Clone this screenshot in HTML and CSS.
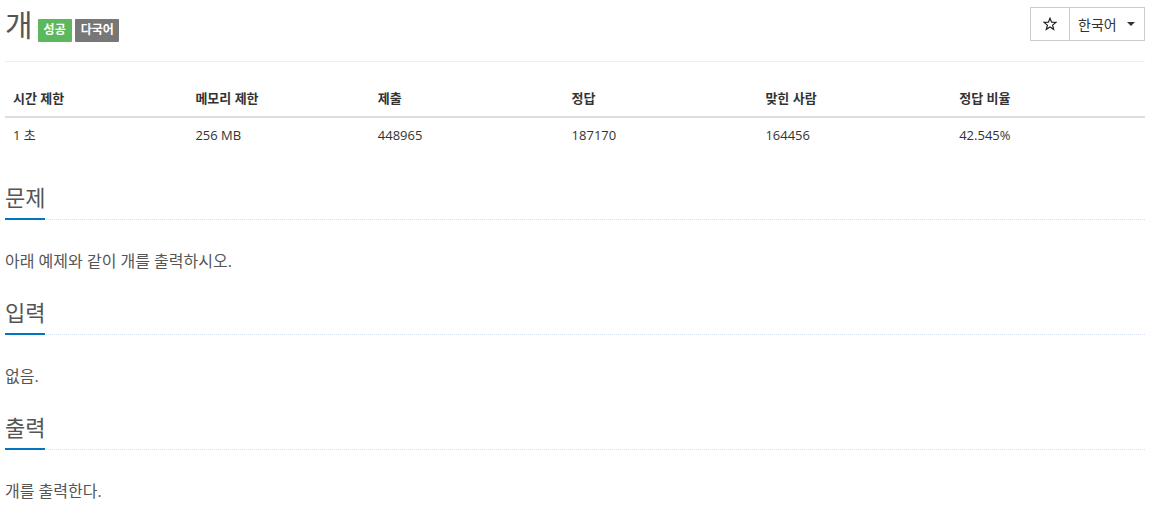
FILE: index.html
```html
<!DOCTYPE html>
<html lang="ko">
<head>
<meta charset="utf-8">
<title>개</title>
<link rel="stylesheet" href="styles.css">
</head>
<body>
<div class="container">
  <div class="page-header">
    <h1 class="title">
      <span class="title-text">개</span>
      <span class="label label-success">성공</span>
      <span class="label label-default">다국어</span>
    </h1>
    <div class="btn-group">
      <button class="btn btn-star" type="button" aria-label="즐겨찾기">
        <svg class="star-icon" width="14" height="14" viewBox="0 0 14 14" aria-hidden="true">
          <path d="M7 1.2 L8.6 5.2 L12.9 5.4 L9.6 8.1 L10.7 12.3 L7 9.9 L3.3 12.3 L4.4 8.1 L1.1 5.4 L5.4 5.2 Z" fill="none" stroke="#222" stroke-width="1.2" stroke-linejoin="miter"/>
        </svg>
      </button>
      <button class="btn btn-lang" type="button">한국어 <span class="caret"></span></button>
    </div>
  </div>

  <table class="info-table">
    <thead>
      <tr>
        <th class="col-narrow">시간 제한</th>
        <th class="col-narrow">메모리 제한</th>
        <th class="col-wide">제출</th>
        <th class="col-wide">정답</th>
        <th class="col-wide">맞힌 사람</th>
        <th class="col-wide">정답 비율</th>
      </tr>
    </thead>
    <tbody>
      <tr>
        <td>1 초</td>
        <td>256 MB</td>
        <td>448965</td>
        <td>187170</td>
        <td>164456</td>
        <td>42.545%</td>
      </tr>
    </tbody>
  </table>

  <section class="problem-section">
    <div class="headline"><h2>문제</h2></div>
    <p class="problem-text">아래 예제와 같이 개를 출력하시오.</p>
  </section>

  <section class="problem-section">
    <div class="headline"><h2>입력</h2></div>
    <p class="problem-text">없음.</p>
  </section>

  <section class="problem-section">
    <div class="headline"><h2>출력</h2></div>
    <p class="problem-text">개를 출력한다.</p>
  </section>
</div>
</body>
</html>
```

FILE: styles.css
```css
* {
  box-sizing: border-box;
}

html, body {
  margin: 0;
  padding: 0;
  background: #fff;
}

body {
  font-family: "Open Sans", "Noto Sans CJK KR", sans-serif;
  font-size: 13px;
  color: #333;
}

.container {
  width: 1140px;
  margin-left: 5px;
}

.page-header {
  display: flex;
  justify-content: space-between;
  align-items: flex-start;
  height: 62px;
  border-bottom: 1px solid #eee;
}

.title {
  margin: 0;
  display: flex;
  align-items: flex-start;
  font-weight: normal;
}

.title-text {
  font-size: 30px;
  line-height: 50px;
  color: #555;
  margin-right: 5px;
}

.label {
  display: inline-block;
  margin-top: 19px;
  margin-right: 3px;
  padding: 5px 6px 6px;
  font-size: 12px;
  line-height: 12px;
  font-weight: bold;
  color: #fff;
  border-radius: 1px;
}

.label-success {
  background: #5cb85c;
}

.label-default {
  background: #777;
  padding: 5px 5px 6px 6px;
}

.btn-group {
  display: flex;
  margin-top: 7px;
}

.btn {
  height: 34px;
  margin: 0;
  background: #fff;
  border: 1px solid #ccc;
  font-family: "Open Sans", "Noto Sans CJK KR", sans-serif;
  font-size: 14px;
  color: #333;
  display: flex;
  align-items: center;
}

.btn-star {
  width: 40px;
  justify-content: center;
  padding: 0;
}

.star-icon {
  display: block;
}

.btn-lang {
  width: 76px;
  margin-left: -1px;
  padding: 0 9px 0 8px;
  justify-content: space-between;
}

.caret {
  display: inline-block;
  width: 0;
  height: 0;
  border-top: 4px solid #333;
  border-left: 4px solid transparent;
  border-right: 4px solid transparent;
}

.info-table {
  width: 100%;
  margin-top: 19px;
  margin-bottom: 33px;
  border-collapse: collapse;
  table-layout: fixed;
}

.col-narrow {
  width: 16%;
}

.col-wide {
  width: 17%;
}

.info-table th,
.info-table td {
  padding: 8px;
  line-height: 18.5px;
  text-align: left;
  font-size: 13px;
}

.info-table th {
  font-weight: bold;
  color: #333;
  border-bottom: 2px solid #ddd;
}

.info-table td {
  color: #333;
}

.headline {
  display: flex;
  border-bottom: 1px dotted #d5deea;
  margin-bottom: 31px;
}

.headline h2 {
  margin: 0 0 -1px 0;
  font-size: 22px;
  line-height: 24px;
  font-weight: normal;
  color: #555;
  padding-bottom: 9px;
  border-bottom: 2px solid #0076c0;
}

.problem-text {
  margin: 0 0 29px;
  font-size: 16px;
  line-height: 20px;
  color: #555;
}
```
